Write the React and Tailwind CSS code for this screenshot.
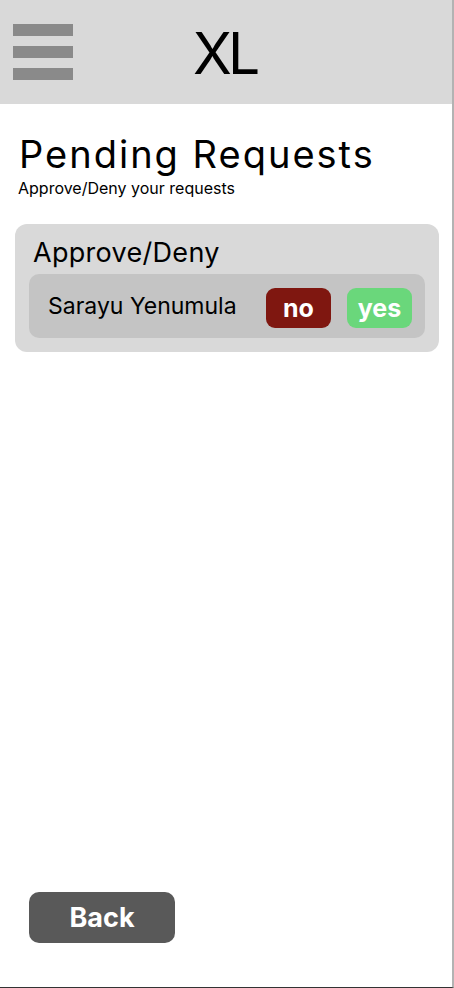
export default function App() {
  return (
    <div
      className="w-[454px] h-[988px] flex flex-col bg-white border-r-2 border-r-[#b3b3b3] border-b border-b-[#333333] overflow-hidden"
      style={{ fontFamily: 'Inter, "Noto Sans", sans-serif' }}
    >
      {/* Top bar */}
      <header className="h-[104px] shrink-0 bg-[#d9d9d9] flex items-start pl-[13px] pt-[24px]">
        <button className="flex flex-col gap-[10px]">
          <span className="block w-[60px] h-[12px] bg-[#8a8a8a]" />
          <span className="block w-[60px] h-[12px] bg-[#8a8a8a]" />
          <span className="block w-[60px] h-[12px] bg-[#8a8a8a]" />
        </button>
        <h1 className="ml-[120px] mt-[1px] text-[57px] leading-none tracking-[-4px] text-black">XL</h1>
      </header>

      <main className="flex-1 flex flex-col">
        <div className="pl-[18px] pt-[31px]">
          <h2 className="text-[38px] leading-none tracking-[2px] text-black pl-[1px]">Pending Requests</h2>
          <p className="mt-[7px] text-[16px] leading-none text-black">Approve/Deny your requests</p>
        </div>

        {/* Requests card */}
        <section className="mt-[28px] ml-[15px] w-[424px] bg-[#d9d9d9] rounded-[12px] px-[14px] pt-[15px] pb-[14px]">
          <h3 className="pl-[4px] text-[27px] leading-none tracking-[0.3px] text-black">Approve/Deny</h3>
          <div className="mt-[8px] h-[64px] bg-[#c4c4c4] rounded-[10px] flex items-center pl-[19px] pr-[13px]">
            <span className="flex-1 text-[23px] text-black">Sarayu Yenumula</span>
            <button className="mt-[4px] w-[65px] h-[40px] rounded-[9px] bg-[#7f1710] text-white font-bold text-[25px] leading-none">
              no
            </button>
            <button className="mt-[4px] ml-[16px] w-[65px] h-[40px] rounded-[9px] bg-[#6ad77b] text-white font-bold text-[25px] leading-none">
              yes
            </button>
          </div>
        </section>

        <div className="flex-1" />

        <div className="pl-[29px] pb-[44px]">
          <button className="w-[146px] h-[51px] rounded-[10px] bg-[#595959] text-white font-bold text-[27px] leading-none">
            Back
          </button>
        </div>
      </main>
    </div>
  );
}
